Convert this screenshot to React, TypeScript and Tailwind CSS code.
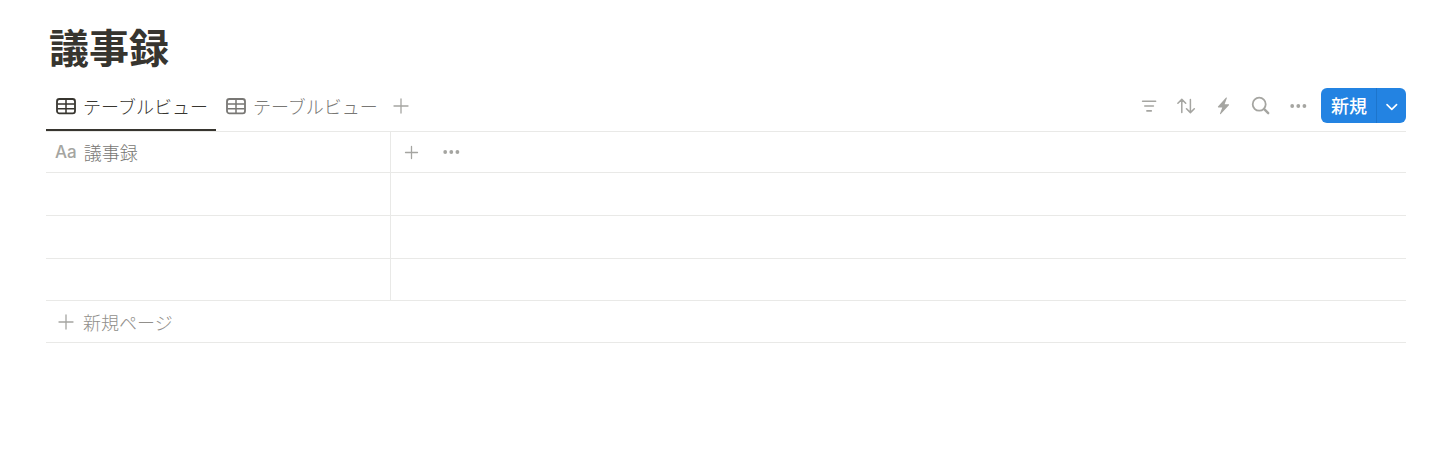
import type { ReactNode } from 'react';

const focusRing = 'focus-visible:outline-2 focus-visible:outline-[#2383e2]';

function TableIcon() {
  return (
    <svg className="size-5 shrink-0" viewBox="0 0 20 20" fill="none" stroke="currentColor" aria-hidden="true">
      <rect x="1" y="3" width="18" height="14.4" rx="2.4" strokeWidth="1.8" />
      <path d="M10 3v14.4M1.5 7.9h17M1.5 12.7h17" strokeWidth="1.5" />
    </svg>
  );
}

function PlusIcon({ small = false }: { small?: boolean }) {
  return (
    <svg className="size-5 shrink-0" viewBox="0 0 20 20" fill="none" stroke="currentColor" strokeWidth="1.3" strokeLinecap="round" aria-hidden="true">
      <path d={small ? 'M10.5 4.5v12M4.5 10.5h12' : 'M10 3v14M3 10h14'} />
    </svg>
  );
}

function DotsIcon() {
  return (
    <svg className="size-5 shrink-0" viewBox="0 0 20 20" fill="currentColor" aria-hidden="true">
      <circle cx="4.2" cy="10" r="1.9" />
      <circle cx="10.3" cy="10" r="1.9" />
      <circle cx="16.4" cy="10" r="1.9" />
    </svg>
  );
}

function FilterIcon() {
  return (
    <svg className="size-5" viewBox="0 0 20 20" fill="none" stroke="currentColor" strokeWidth="1.6" strokeLinecap="round" aria-hidden="true">
      <path d="M2.6 5.2h13M4.8 10h8.6M6.9 14.9h4.4" />
    </svg>
  );
}

function SortIcon() {
  return (
    <svg className="size-5" viewBox="0 0 20 20" fill="none" stroke="currentColor" strokeWidth="1.5" strokeLinecap="round" strokeLinejoin="round" aria-hidden="true">
      <path d="M4.8 16.4V3.4M.9 7.3l3.9-3.9 3.9 3.9M13.4 3.6v13M9.5 12.7l3.9 3.9 3.9-3.9" />
    </svg>
  );
}

function BoltIcon() {
  return (
    <svg className="size-5" viewBox="0 0 20 20" fill="currentColor" aria-hidden="true">
      <path d="M12.1 1.6 4 10.5c-.3.4-.1.9.4.9h3.9L6 17.6c-.2.6.4.9.8.5l8.1-8.9c.3-.4.1-.9-.4-.9h-3.9l2.3-6.2c.2-.6-.4-.9-.8-.5z" />
    </svg>
  );
}

function SearchIcon() {
  return (
    <svg className="size-5" viewBox="0 0 20 20" fill="none" stroke="currentColor" strokeLinecap="round" aria-hidden="true">
      <circle cx="8.2" cy="8.2" r="6.5" strokeWidth="1.8" />
      <path d="m13.2 13.2 4 4" strokeWidth="2.4" />
    </svg>
  );
}

function IconButton({ label, children }: { label: string; children: ReactNode }) {
  return (
    <button type="button" aria-label={label} className={`flex h-9 w-[37px] items-center justify-center rounded hover:bg-[#f1f1ef] ${focusRing}`}>
      {children}
    </button>
  );
}

function ViewTab({ selected = false }: { selected?: boolean }) {
  return (
    <button
      type="button"
      role="tab"
      aria-selected={selected}
      className={`flex items-center gap-[7px] border-b-2 pr-2 pb-0.5 pl-2.5 ${selected ? 'border-[#37352f] text-[#37352f]' : 'border-transparent text-[#787774]'}`}
    >
      <TableIcon />
      テーブルビュー
    </button>
  );
}

export default function App() {
  return (
    <main className="bg-white pt-[18px] pr-11 pl-[46px] font-['Noto_Sans_CJK_JP',sans-serif] text-lg leading-6 font-light text-[#37352f]">
      <h1 className="pl-[3px] text-[40px] leading-[56px] font-bold">議事録</h1>

      <div className="mt-2.5 flex h-12 items-stretch justify-between border-b border-[#e9e9e7]">
        <div className="flex items-stretch">
          <div role="tablist" aria-label="ビュー" className="flex">
            <ViewTab selected />
            <ViewTab />
          </div>
          <button type="button" aria-label="ビューを追加" className={`flex w-[30px] items-center justify-center pb-1 text-[#a5a5a1] ${focusRing}`}>
            <PlusIcon />
          </button>
        </div>

        <div className="flex items-center gap-[5px] pb-1 text-[#a5a5a1]">
          <div className="flex">
            <IconButton label="フィルター"><FilterIcon /></IconButton>
            <IconButton label="並べ替え"><SortIcon /></IconButton>
            <IconButton label="オートメーション"><BoltIcon /></IconButton>
            <IconButton label="検索"><SearchIcon /></IconButton>
            <IconButton label="その他"><DotsIcon /></IconButton>
          </div>
          <div className="flex h-[35px] overflow-hidden rounded-md bg-[#2383e2] text-white">
            <button type="button" className={`border-r border-[#1d75cc] pr-[9px] pb-0.5 pl-2.5 font-medium ${focusRing}`}>新規</button>
            <button type="button" aria-label="新規メニュー" className={`flex w-[29px] items-center justify-center ${focusRing}`}>
              <svg className="size-4" viewBox="0 0 16 16" fill="none" stroke="currentColor" strokeWidth="1.6" strokeLinecap="round" strokeLinejoin="round" aria-hidden="true">
                <path d="m3 6.6 4.8 4.8 4.8-4.8" />
              </svg>
            </button>
          </div>
        </div>
      </div>

      <table className="w-full table-fixed border-separate border-spacing-0 text-left">
        <thead>
          <tr className="h-[41px]">
            <th scope="col" className="w-[345px] border-r border-b border-[#e9e9e7] p-0 pl-[9px] font-light text-[#787774]">
              <div className="flex items-center gap-[7px]">
                <span aria-hidden="true" className="font-['Inter',sans-serif] text-[17px] font-medium text-[#a5a5a1]">Aa</span>
                議事録
              </div>
            </th>
            <td className="border-b border-[#e9e9e7] p-0 text-[#a5a5a1]">
              <div className="flex">
                <button type="button" aria-label="プロパティを追加" className={`flex w-10 items-center justify-center ${focusRing}`}><PlusIcon small /></button>
                <button type="button" aria-label="プロパティのメニュー" className={`flex w-10 items-center justify-center ${focusRing}`}><DotsIcon /></button>
              </div>
            </td>
          </tr>
        </thead>
        <tbody>
          {[1, 2, 3].map((row) => (
            <tr key={row} className="h-[43px] last:h-[42px]">
              <td className="border-r border-b border-[#e9e9e7] p-0" />
              <td className="border-b border-[#e9e9e7] p-0" />
            </tr>
          ))}
        </tbody>
      </table>

      <button type="button" className={`flex h-[42px] w-full items-center gap-[7px] border-b border-[#e9e9e7] pl-2.5 text-[#918f8b] ${focusRing}`}>
        <span className="text-[#a5a5a1]"><PlusIcon /></span>
        新規ページ
      </button>
    </main>
  );
}
